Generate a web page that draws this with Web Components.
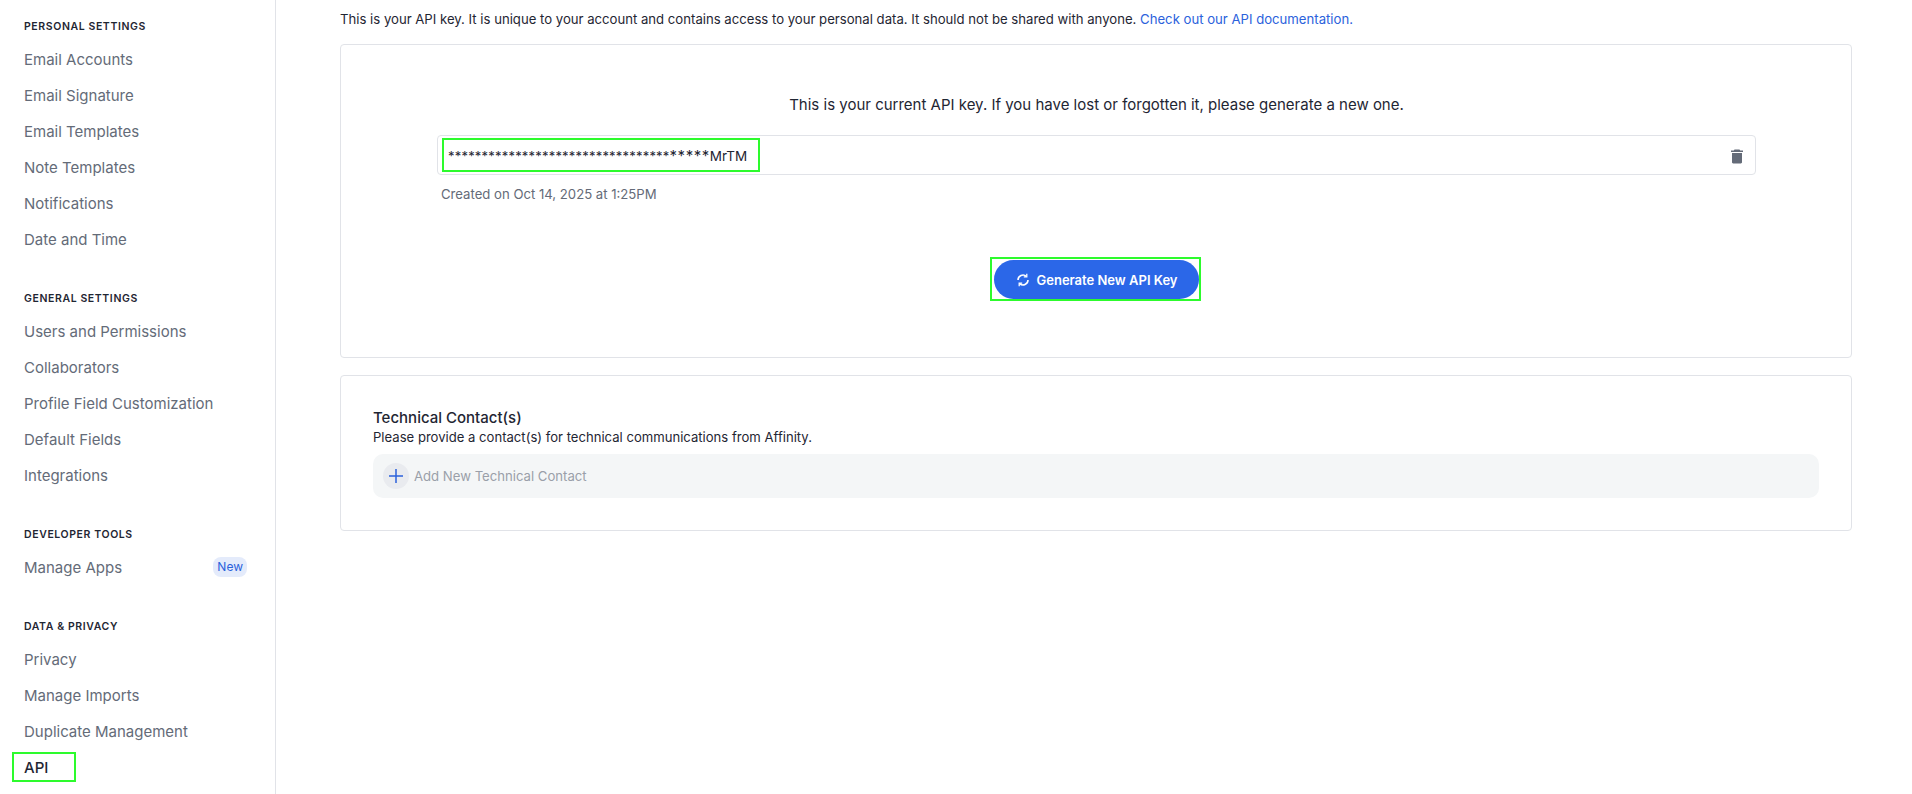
<!DOCTYPE html>
<html lang="en">
<head>
<meta charset="utf-8">
<title>API Settings</title>
<style>
html, body { margin: 0; height: 100%; overflow: hidden; background: #fff; }
body { font-family: Inter, "Liberation Sans", sans-serif; }
</style>
</head>
<body>
<settings-page>
  <settings-sidebar slot="side">
    <nav-section title="Personal Settings">
      <nav-item>Email Accounts</nav-item>
      <nav-item>Email Signature</nav-item>
      <nav-item>Email Templates</nav-item>
      <nav-item>Note Templates</nav-item>
      <nav-item>Notifications</nav-item>
      <nav-item>Date and Time</nav-item>
    </nav-section>
    <nav-section title="General Settings">
      <nav-item>Users and Permissions</nav-item>
      <nav-item>Collaborators</nav-item>
      <nav-item>Profile Field Customization</nav-item>
      <nav-item>Default Fields</nav-item>
      <nav-item>Integrations</nav-item>
    </nav-section>
    <nav-section title="Developer Tools">
      <nav-item badge="New">Manage Apps</nav-item>
    </nav-section>
    <nav-section title="Data &amp; Privacy">
      <nav-item>Privacy</nav-item>
      <nav-item>Manage Imports</nav-item>
      <nav-item>Duplicate Management</nav-item>
      <nav-item active>API</nav-item>
    </nav-section>
  </settings-sidebar>
  <api-intro></api-intro>
  <api-key-card></api-key-card>
  <contact-card></contact-card>
</settings-page>

<script>
class settingsPage extends HTMLElement {
   constructor() {
      super();
      this.attachShadow({mode: 'open'});
      this.shadowRoot.innerHTML = `
        <style>
        :host{ display:flex; height:794px; overflow:hidden; }
        .side{ flex:0 0 275px; border-right:1px solid #e1e3e8; }
        .main{ flex:1; padding:0 60px 0 64px; display:flex; flex-direction:column; min-width:0; }
        </style>
        <div class="side"><slot name="side"></slot></div>
        <div class="main"><slot></slot></div>
      `;
   }
}
customElements.define('settings-page', settingsPage);

class settingsSidebar extends HTMLElement {
   constructor() {
      super();
      this.attachShadow({mode: 'open'});
      this.shadowRoot.innerHTML = `
        <style>
        :host{ display:flex; flex-direction:column; gap:33px; padding-top:18px; }
        </style>
        <slot></slot>
      `;
   }
}
customElements.define('settings-sidebar', settingsSidebar);

class navSection extends HTMLElement {
   constructor() {
      super();
      this.attachShadow({mode: 'open'});
   }
   connectedCallback() {
      this.shadowRoot.innerHTML = `
        <style>
        :host{ display:block; }
        h3{
            margin:0 0 6px 24px;
            padding-top:1px;
            font-size:10.5px;
            line-height:16px;
            font-weight:600;
            letter-spacing:.6px;
            text-transform:uppercase;
            color:#1f2633;
        }
        </style>
        <h3>${this.getAttribute('title')}</h3>
        <slot></slot>
      `;
   }
}
customElements.define('nav-section', navSection);

class navItem extends HTMLElement {
   constructor() {
      super();
      this.attachShadow({mode: 'open'});
   }
   connectedCallback() {
      const badge = this.getAttribute('badge');
      this.shadowRoot.innerHTML = `
        <style>
        :host{
            display:flex;
            align-items:center;
            justify-content:space-between;
            position:relative;
            height:36px;
            padding:0 28px 0 24px;
            font-size:15px;
            color:#646b78;
        }
        :host([active]){ color:#1f2633; font-weight:500; }
        :host([active])::after{
            content:"";
            position:absolute;
            left:12px;
            top:3px;
            width:60px;
            height:26px;
            border:2px solid #2dfb2d;
        }
        .badge{
            font-size:12px;
            line-height:20px;
            padding:0 4px;
            border-radius:8px;
            background:#e4ebfb;
            color:#2b62dc;
        }
        </style>
        <span><slot></slot></span>
        ${badge ? `<span class="badge">${badge}</span>` : ''}
      `;
   }
}
customElements.define('nav-item', navItem);

class apiIntro extends HTMLElement {
   constructor() {
      super();
      this.attachShadow({mode: 'open'});
      this.shadowRoot.innerHTML = `
        <style>
        :host{
            display:block;
            margin:10px 0 15px 0;
            font-size:13.15px;
            line-height:19px;
            color:#1f2633;
        }
        a{ color:#2b62dc; text-decoration:none; }
        </style>
        This is your API key. It is unique to your account and contains access to your personal data. It should not be shared with anyone. <a href="#">Check out our API documentation.</a>
      `;
   }
}
customElements.define('api-intro', apiIntro);

class apiKeyCard extends HTMLElement {
   constructor() {
      super();
      this.attachShadow({mode: 'open'});
      this.shadowRoot.innerHTML = `
        <style>
        :host{
            display:block;
            height:314px;
            box-sizing:border-box;
            border:1px solid #e1e3e8;
            border-radius:4px;
            padding:49px 95px 0 96px;
        }
        .lead{
            text-align:center;
            font-size:15px;
            line-height:22px;
            color:#1f2633;
            margin:0 0 19px;
        }
        .key{
            display:flex;
            align-items:center;
            justify-content:space-between;
            position:relative;
            height:40px;
            box-sizing:border-box;
            border:1px solid #e1e3e8;
            border-radius:4px;
            padding:1px 10px 0 10px;
            font-size:13.5px;
            color:#1f2633;
        }
        .key b{ font-weight:400; font-size:13px; letter-spacing:.2px; }
        .key i{ font-style:normal; font-size:15px; letter-spacing:.55px; }
        .key .mark{
            position:absolute;
            left:4px;
            top:2px;
            width:314px;
            height:30px;
            border:2px solid #2dfb2d;
        }
        .key svg{ width:16px; height:16px; fill:#646b78; }
        .made{
            margin:10px 0 0 4px;
            font-size:13.15px;
            line-height:18px;
            color:#646b78;
        }
        .action{ display:flex; justify-content:center; margin-top:57px; }
        .btn{
            display:flex;
            align-items:center;
            justify-content:center;
            gap:6px;
            position:relative;
            width:205px;
            height:39px;
            margin-right:1px;
            border:0;
            border-radius:20px;
            background:#2b67e8;
            color:#fff;
            font:600 13px Inter, "Liberation Sans", sans-serif;
        }
        .btn::after{
            content:"";
            position:absolute;
            left:-4px;
            top:-3px;
            width:207px;
            height:40px;
            border:2px solid #2dfb2d;
        }
        .btn svg{ width:16px; height:16px; fill:none; stroke:#fff; stroke-width:1.6; }
        </style>
        <p class="lead">This is your current API key. If you have lost or forgotten it, please generate a new one.</p>
        <div class="key">
          <span><b>*********************************</b><i>*****</i>MrTM</span>
          <span class="mark"></span>
          <svg viewBox="0 0 16 16"><path d="M5.500 1.500h5l.7 1H14v1.600H2V2.500h2.800zM3 5h10v9.300c0 .7-.5 1.200-1.200 1.200H4.200c-.7 0-1.200-.5-1.200-1.200z"/></svg>
        </div>
        <p class="made">Created on Oct 14, 2025 at 1:25PM</p>
        <div class="action">
          <button class="btn" type="button">
            <svg viewBox="0 0 16 16"><path d="M3 8a5 5 0 0 1 8.300-3.700M13 8a5 5 0 0 1-8.300 3.700"/><path d="M11.800 1.800v3h-3M4.200 14.200v-3h3" stroke-width="1.300"/></svg>
            Generate New API Key
          </button>
        </div>
      `;
   }
}
customElements.define('api-key-card', apiKeyCard);

class contactCard extends HTMLElement {
   constructor() {
      super();
      this.attachShadow({mode: 'open'});
      this.shadowRoot.innerHTML = `
        <style>
        :host{
            display:block;
            margin-top:17px;
            height:156px;
            box-sizing:border-box;
            border:1px solid #e1e3e8;
            border-radius:4px;
            padding:32px 32px 0;
        }
        h4{
            margin:0;
            font-size:15px;
            line-height:20px;
            font-weight:500;
            color:#1f2633;
        }
        p{
            margin:0 0 7px;
            font-size:13.1px;
            line-height:19px;
            color:#1f2633;
        }
        .add{
            display:flex;
            align-items:center;
            gap:5px;
            height:44px;
            padding-left:10px;
            border-radius:10px;
            background:#f4f6f7;
            font-size:13.15px;
            color:#9a9fa9;
        }
        .plus{
            display:flex;
            align-items:center;
            justify-content:center;
            width:26px;
            height:26px;
            border-radius:50%;
            background:#e9ebef;
        }
        .plus svg{ width:14px; height:14px; stroke:#2b62dc; stroke-width:1.5; fill:none; }
        </style>
        <h4>Technical Contact(s)</h4>
        <p>Please provide a contact(s) for technical communications from Affinity.</p>
        <div class="add">
          <span class="plus"><svg viewBox="0 0 14 14"><path d="M7 0v14M0 7h14"/></svg></span>
          Add New Technical Contact
        </div>
      `;
   }
}
customElements.define('contact-card', contactCard);
</script>
</body>
</html>
